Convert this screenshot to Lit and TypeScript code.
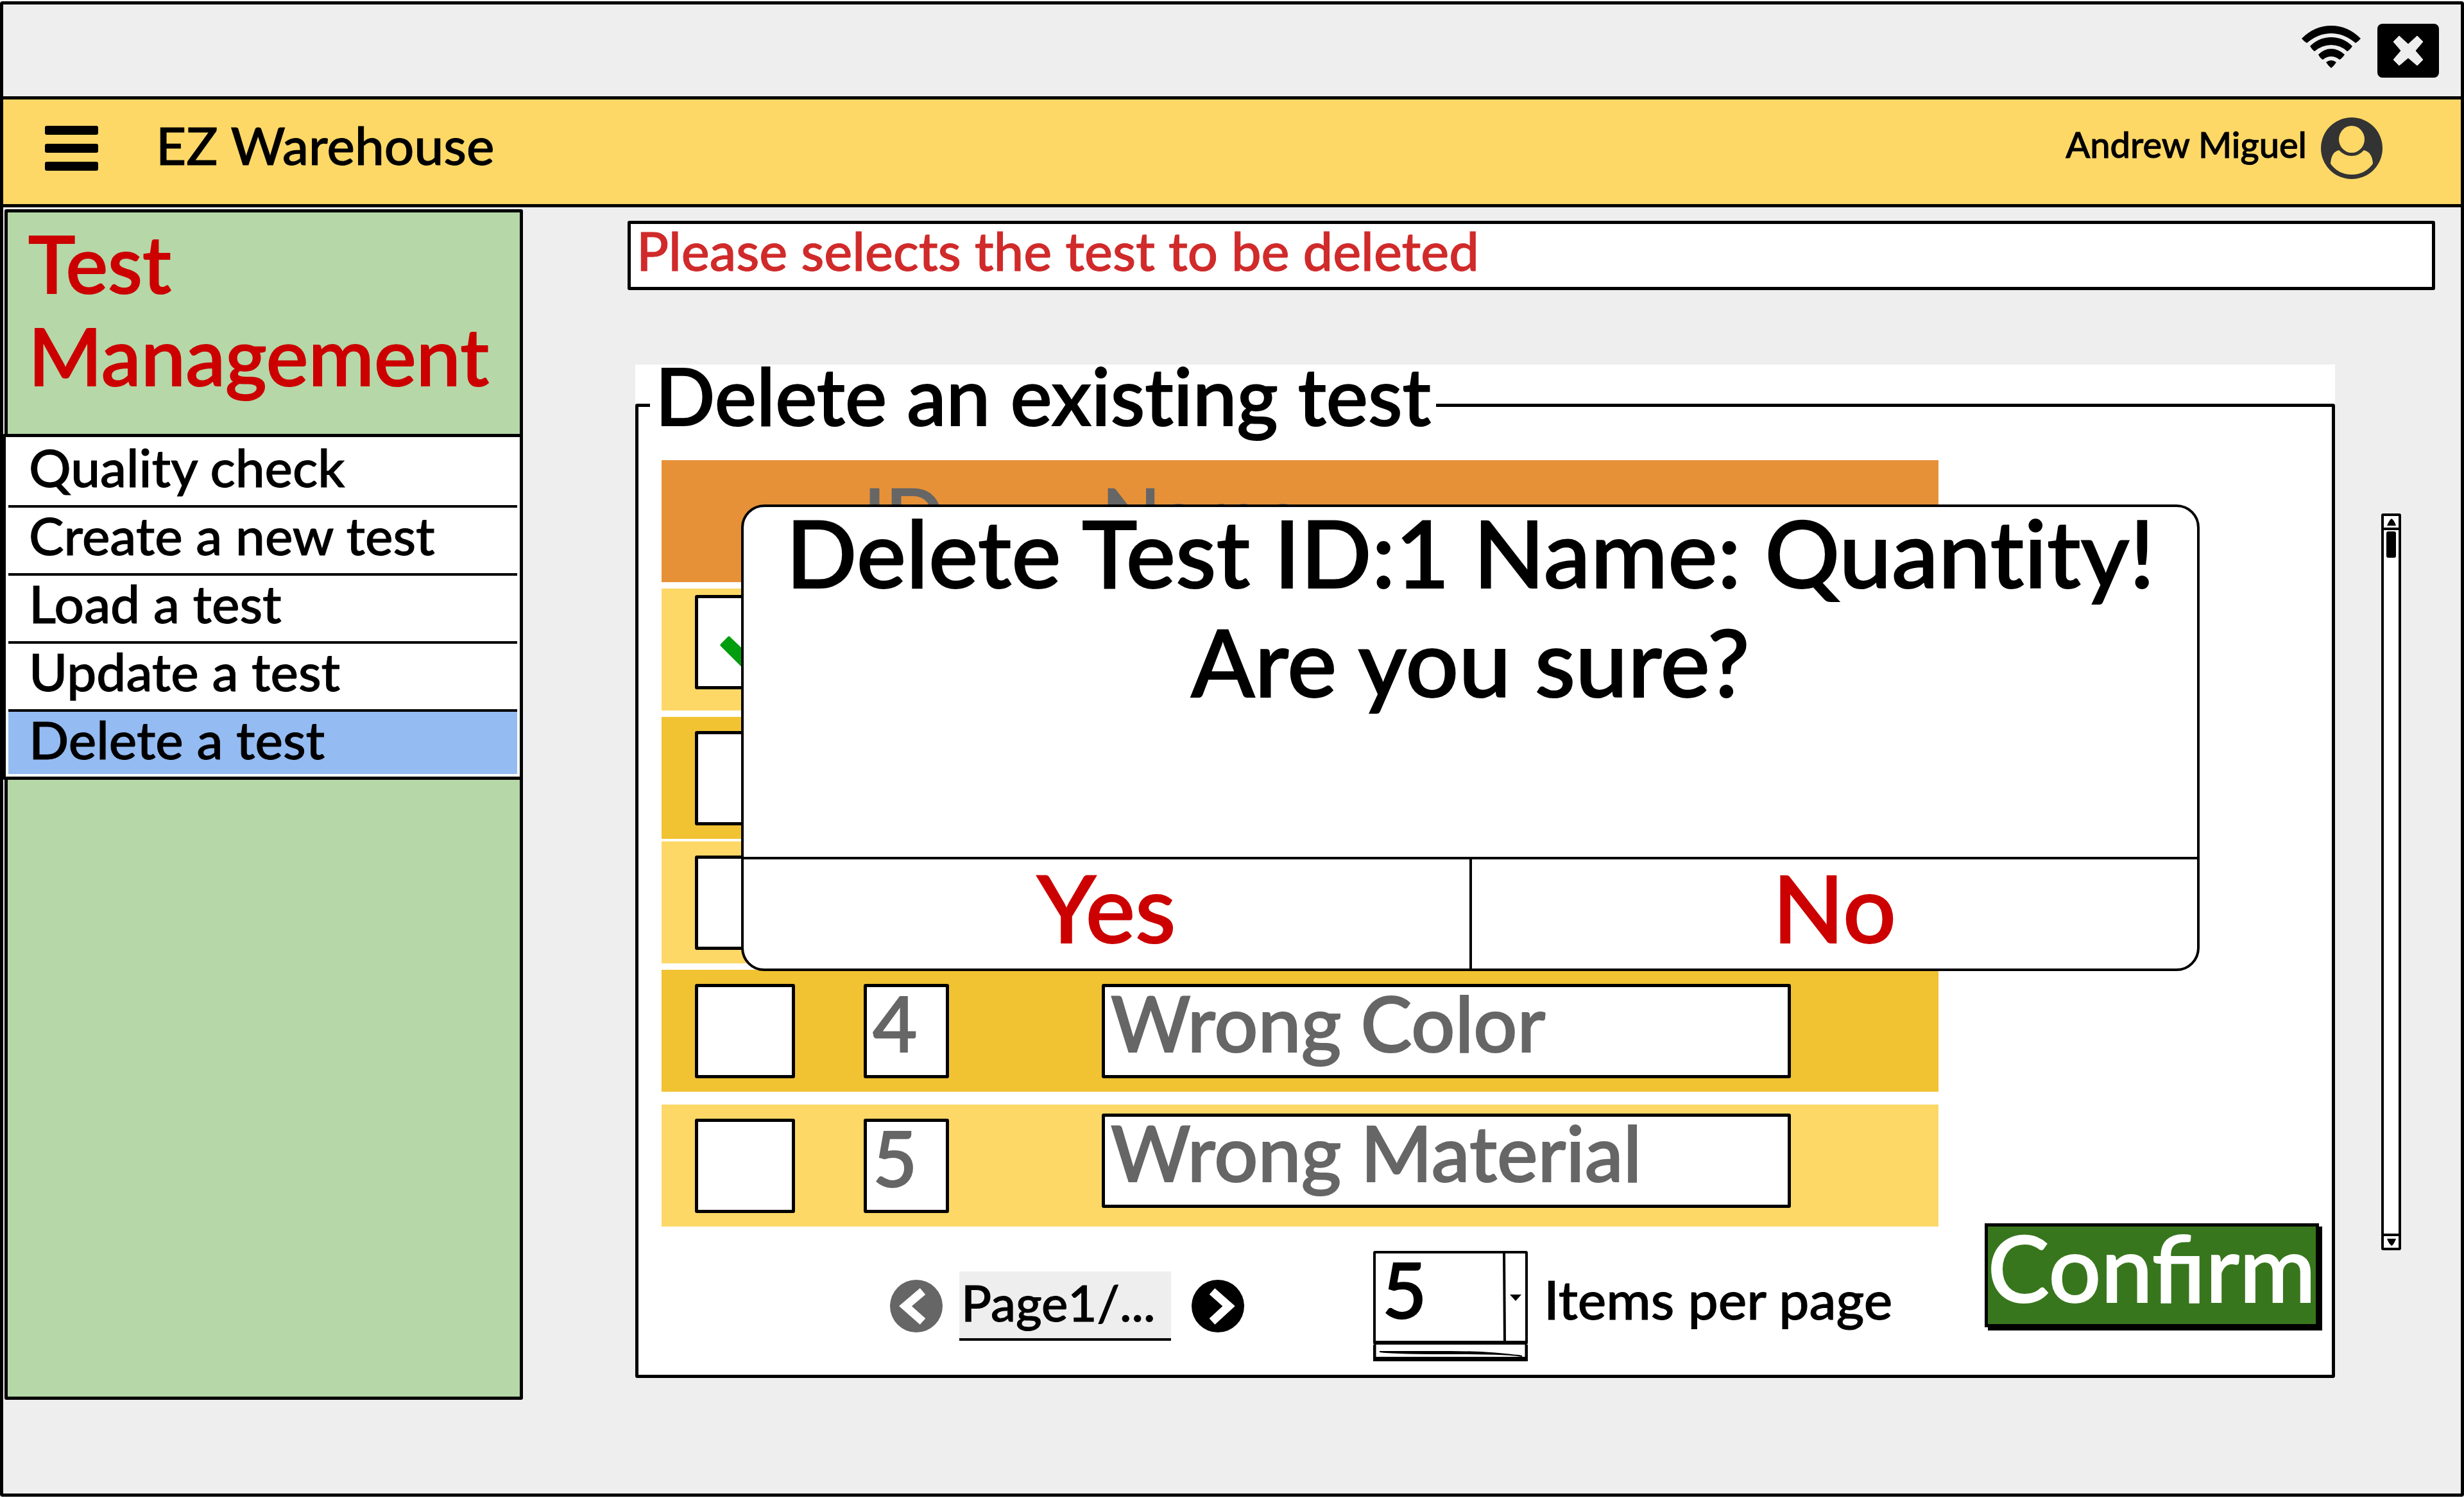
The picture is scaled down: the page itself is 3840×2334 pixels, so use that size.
import { LitElement, html, css, svg, nothing } from "lit";
import { customElement, property, state } from "lit/decorators.js";
import { classMap } from "lit/directives/class-map.js";

interface TestRow {
  id: string;
  name: string;
  tone: "light" | "dark";
  gap: "normal" | "tight" | "wide";
  align?: "raised" | "lifted";
}

const MENU = ["Quality check", "Create a new test", "Load a test", "Update a test", "Delete a test"];

const ROWS: TestRow[] = [
  { id: "1", name: "Quantity", tone: "light", gap: "normal", align: "raised" },
  { id: "2", name: "", tone: "dark", gap: "normal" },
  { id: "3", name: "", tone: "light", gap: "tight" },
  { id: "4", name: "Wrong Color", tone: "dark", gap: "normal" },
  { id: "5", name: "Wrong Material", tone: "light", gap: "wide", align: "lifted" },
];

const base = css`
  * {
    box-sizing: border-box;
  }
  button,
  input,
  select {
    font: inherit;
    font-variant-ligatures: inherit;
    color: inherit;
    margin: 0;
    padding: 0;
    border: 0;
    border-radius: 0;
    background: none;
    appearance: none;
  }
  svg {
    display: block;
  }
`;

@customElement("top-bars")
class TopBars extends LitElement {
  static styles = [
    base,
    css`
      :host {
        display: block;
      }
      .status {
        display: flex;
        justify-content: flex-end;
        align-items: center;
        gap: 26px;
        height: 148px;
        padding: 0 34px 0 0;
        border-bottom: 5px solid #000;
      }
      .status .wifi {
        width: 92px;
        height: 66px;
        margin-bottom: 12px;
      }
      .status .close {
        width: 96px;
        height: 84px;
      }
      .brand {
        display: flex;
        align-items: center;
        height: 168px;
        padding: 0 122px 12px 65px;
        background: #fdd866;
        border-bottom: 5px solid #000;
      }
      .menu {
        width: 83px;
        height: 70px;
      }
      .title {
        flex: 1;
        margin: 0 0 0 90px;
        padding-bottom: 12px;
        font-size: 82px;
        font-weight: 500;
      }
      .user {
        padding-bottom: 12px;
        margin-right: 22px;
        font-size: 56px;
      }
      .avatar {
        width: 96px;
        height: 96px;
      }
    `,
  ];

  render() {
    return html`
      <div class="status">
        <svg class="wifi" viewBox="0 0 92 66" role="img" aria-label="Wi-Fi">
          <path d="M0 20Q20 0 46 0T92 20Q88 25 84 27Q66 12 46 12T8 27Q4 25 0 20Z" />
          <path d="M13 32Q27 18 46 18T79 32Q75 38 71 40Q60 30 46 30T20 40Q16 37 13 32Z" />
          <path d="M26 45Q35 36 46 36T67 45Q63 51 59 53Q53 48 46 48T33 53Q29 51 26 45Z" />
          <path d="M38 57Q42 54 46 54T54 57Q51 62 46 66Q41 62 38 57Z" />
        </svg>
        <button class="close" aria-label="Close">
          <svg viewBox="0 0 96 84">
            <rect width="96" height="84" rx="8" />
            <path
              fill="#eeeeee"
              d="M34 19L48 32L62 19L71 28L59 42L71 56L62 65L48 53L34 65L25 56L37 42L25 28Z"
              stroke="#eeeeee"
              stroke-width="1"
              stroke-linejoin="round"
            />
          </svg>
        </button>
      </div>
      <header class="brand">
        <button class="menu" aria-label="Menu">
          <svg viewBox="0 0 83 70">
            <rect width="83" height="14" rx="3" />
            <rect y="28" width="83" height="14" rx="3" />
            <rect y="56" width="83" height="14" rx="3" />
          </svg>
        </button>
        <h1 class="title">EZ Warehouse</h1>
        <span class="user">Andrew Miguel</span>
        <svg class="avatar" viewBox="0 0 96 96" role="img" aria-label="Profile">
          <circle cx="48" cy="48" r="48" fill="#333" />
          <path fill="#fdd866" d="M28 51Q16 54 15 72Q27 89 48 89T81 72Q80 54 67 51Q59 60 48 60T28 51Z" />
          <ellipse cx="48" cy="34" rx="20" ry="21" fill="#fdd866" />
        </svg>
      </header>
    `;
  }
}

@customElement("side-menu")
class SideMenu extends LitElement {
  @property({ attribute: false }) items: string[] = [];
  @property() current = "";

  static styles = [
    base,
    css`
      :host {
        display: block;
        background: #b6d7a8;
        border: 5px solid #000;
        border-radius: 3px;
      }
      .heading {
        margin: 0;
        padding: 6px 0 51px 32px;
        color: #cc0000;
        font-size: 124px;
        font-weight: 500;
        line-height: 144px;
        -webkit-text-stroke-width: 2px;
      }
      .list {
        margin: 0 -5px 0 -8px;
        padding: 4px 0 0;
        list-style: none;
        background: #fff;
        border: 5px solid #000;
        border-radius: 3px;
      }
      .item {
        margin: 0 4px;
        border-bottom: 4px solid #000;
      }
      .item:last-child {
        border-bottom-color: #fff;
      }
      .link {
        display: block;
        padding: 0 0 18px 32px;
        color: #000;
        font-size: 82px;
        line-height: 84px;
        text-decoration: none;
      }
      .item:last-child .link {
        padding-bottom: 13px;
      }
      .link.active {
        background: #94bbf2;
      }
    `,
  ];

  render() {
    return html`
      <h2 class="heading">Test<br />Management</h2>
      <ul class="list">
        ${this.items.map(
          (t) => html`<li class="item">
            <a class=${classMap({ link: true, active: t === this.current })} href="#">${t}</a>
          </li>`,
        )}
      </ul>
    `;
  }
}

@customElement("test-table")
class TestTable extends LitElement {
  @property({ attribute: false }) rows: TestRow[] = [];
  @state() private picked = "1";

  static styles = [
    base,
    css`
      :host {
        display: block;
        color: #666;
        font-size: 120px;
        -webkit-text-stroke-width: 2px;
      }
      .grid,
      .part {
        display: block;
      }
      .row {
        display: grid;
        grid-template-columns: 156px 133px 1fr;
        column-gap: 107px;
        align-items: center;
        height: 190px;
        padding: 0 230px 0 52px;
      }
      .row.head {
        background: #e69138;
      }
      .row.light {
        background: #fdd866;
      }
      .row.dark {
        background: #f1c232;
      }
      .row.normal {
        margin-top: 10px;
      }
      .row.tight {
        margin-top: 4px;
      }
      .row.wide {
        margin-top: 20px;
      }
      .row.raised {
        padding-bottom: 24px;
      }
      .row.lifted .name {
        padding-bottom: 16px;
      }
      .cell {
        display: block;
        padding: 0;
        text-align: left;
        font-weight: inherit;
      }
      .name {
        padding-left: 131px;
      }
      .row.head .cell {
        padding-bottom: 20px;
      }
      .box {
        display: block;
        width: 100%;
        height: 147px;
        padding: 0 0 26px 9px;
        background: #fff;
        border: 5px solid #000;
        border-radius: 3px;
      }
      .pick {
        display: grid;
      }
      .pick > * {
        grid-area: 1 / 1;
      }
      .mark {
        width: 156px;
        height: 147px;
        pointer-events: none;
      }
    `,
  ];

  private toggle(id: string) {
    this.picked = this.picked === id ? "" : id;
  }

  render() {
    return html`
      <table class="grid">
        <thead class="part">
          <tr class="row head">
            <td class="cell"></td>
            <th class="cell" scope="col">ID</th>
            <th class="cell name" scope="col">Name</th>
          </tr>
        </thead>
        <tbody class="part">
          ${this.rows.map(
            (r) => html`<tr class="row ${r.tone} ${r.gap} ${r.align ?? ""}">
              <td class="cell">
                <label class="pick">
                  <input
                    class="box"
                    type="checkbox"
                    aria-label="Select test ${r.id}"
                    .checked=${this.picked === r.id}
                    @change=${() => this.toggle(r.id)}
                  />
                  ${this.picked === r.id
                    ? svg`<svg class="mark" viewBox="0 0 156 147">
                        <path d="M42 78L53 67L78 91L120 49L132 61L78 114Z" fill="#009e0f" stroke="#009e0f" stroke-width="5" stroke-linejoin="round" />
                      </svg>`
                    : nothing}
                </label>
              </td>
              <td class="cell"><input class="box" aria-label="ID" readonly .value=${r.id} /></td>
              <td class="cell name"><input class="box" aria-label="Name" readonly .value=${r.name} /></td>
            </tr>`,
          )}
        </tbody>
      </table>
    `;
  }
}

@customElement("page-controls")
class PageControls extends LitElement {
  static styles = [
    base,
    css`
      :host {
        display: flex;
        align-items: center;
        padding-left: 356px;
        font-size: 78px;
      }
      .step {
        width: 83px;
        height: 83px;
      }
      .page {
        width: 330px;
        height: 108px;
        margin: 0 32px 0 25px;
        padding: 0 0 8px 3px;
        background: #eee;
        border-bottom: 4px solid #000;
      }
      .size {
        display: grid;
        width: 241px;
        margin-left: 200px;
      }
      .choice {
        grid-area: 1 / 1;
        height: 146px;
        padding: 0 0 26px 10px;
        background: #fff;
        border: 4px solid #000;
        border-bottom-width: 6px;
        border-radius: 3px;
        font-size: 120px;
        line-height: 110px;
        -webkit-text-stroke-width: 2px;
      }
      .arrow {
        grid-area: 1 / 1;
        justify-self: end;
        width: 40px;
        height: 146px;
        pointer-events: none;
      }
      .drawer {
        width: 241px;
        height: 26px;
      }
      .label {
        margin-left: 25px;
        padding-bottom: 24px;
        font-size: 84px;
      }
    `,
  ];

  render() {
    return html`
      <button class="step" aria-label="Previous page">
        <svg viewBox="0 0 83 83">
          <circle cx="41" cy="41" r="41" fill="#666" />
          <path d="M51 18L24 41L51 65" fill="none" stroke="#fff" stroke-width="13" />
        </svg>
      </button>
      <input class="page" aria-label="Page" value="Page1/..." />
      <button class="step" aria-label="Next page">
        <svg viewBox="0 0 83 83">
          <circle cx="41" cy="41" r="41" />
          <path d="M32 18L58 41L32 65" fill="none" stroke="#fff" stroke-width="13" />
        </svg>
      </button>
      <div class="size">
        <select class="choice" id="size">
          <option>5</option>
        </select>
        <svg class="arrow" viewBox="0 0 40 146">
          <path d="M3 2L4 144" stroke="#000" stroke-width="4" />
          <path d="M12 68H30L21 78Z" />
        </svg>
        <svg class="drawer" viewBox="0 0 241 26">
          <path d="M2 0V22H239V0" fill="none" stroke="#000" stroke-width="5" />
          <path d="M0 19H241V26H0Z" />
          <path d="M10 11Q30 14 120 14T232 18Q180 11 120 11T10 11Z" stroke="#000" stroke-width="2" />
        </svg>
      </div>
      <label class="label" for="size">Items per page</label>
    `;
  }
}

@customElement("confirm-dialog")
class ConfirmDialog extends LitElement {
  static styles = [
    base,
    css`
      :host {
        display: flex;
        flex-direction: column;
        background: #fff;
        border: 4px solid #000;
        border-radius: 36px;
        font-size: 146px;
        text-align: center;
        -webkit-text-stroke-width: 2px;
      }
      .text {
        flex: 1;
      }
      .line {
        margin: 0 0 30px;
        line-height: 140px;
        white-space: nowrap;
      }
      .actions {
        display: flex;
        height: 174px;
        border-top: 4px solid #000;
      }
      .answer {
        flex: 1;
        padding-bottom: 22px;
        color: #cc0000;
        line-height: 148px;
      }
      .answer + .answer {
        border-left: 4px solid #000;
      }
    `,
  ];

  render() {
    return html`
      <div class="text">
        <p class="line">Delete Test ID:1 Name: Quantity!</p>
        <p class="line">Are you sure?</p>
      </div>
      <div class="actions">
        <button class="answer">Yes</button>
        <button class="answer">No</button>
      </div>
    `;
  }
}

@customElement("scroll-track")
class ScrollTrack extends LitElement {
  static styles = [
    base,
    css`
      :host {
        display: flex;
        flex-direction: column;
        background: #fff;
        border: 4px solid #000;
        border-radius: 3px;
      }
      .end {
        height: 22px;
        border-bottom: 4px solid #000;
      }
      .end.down {
        border-bottom: 0;
        border-top: 4px solid #000;
      }
      .end svg {
        width: 14px;
        height: 11px;
        margin: 0 auto;
      }
      .track {
        flex: 1;
        padding: 2px 4px;
      }
      .thumb {
        height: 41px;
        background: #000;
        border-radius: 3px;
      }
    `,
  ];

  render() {
    return html`
      <button class="end" aria-label="Scroll up">
        <svg viewBox="0 0 14 11"><path d="M7 0Q11 2 14 11H0Q3 3 7 0Z" /></svg>
      </button>
      <div class="track"><div class="thumb"></div></div>
      <button class="end down" aria-label="Scroll down">
        <svg viewBox="0 0 14 11"><path d="M7 11Q11 9 14 0H0Q3 8 7 11Z" /></svg>
      </button>
    `;
  }
}

@customElement("app-root")
class AppRoot extends LitElement {
  static styles = [
    base,
    css`
      :host {
        display: flex;
        flex-direction: column;
        box-sizing: border-box;
        min-height: 100vh;
        padding: 2px 0;
        background: #fff;
        color: #000;
        font-family: Lato, "Liberation Sans", sans-serif;
        font-weight: 500;
        font-variant-ligatures: no-common-ligatures;
        -webkit-text-stroke-width: 1px;
      }
      .window {
        display: flex;
        flex-direction: column;
        flex: 1;
        background: #eee;
        border: 5px solid #000;
        border-radius: 4px;
      }
      .body {
        display: flex;
        flex: 1;
        padding: 0 40px 0 2px;
      }
      side-menu {
        width: 808px;
        margin: 3px 0 146px;
      }
      .main {
        flex: 1;
        min-width: 0;
        padding: 21px 0 0 163px;
      }
      .notice {
        margin: 0;
        padding: 0 0 16px 9px;
        background: #fff;
        border: 5px solid #000;
        border-radius: 3px;
        color: #d02a2a;
        font-size: 83px;
        line-height: 82px;
      }
      .work {
        display: flex;
        gap: 72px;
        padding: 116px 53px 0 12px;
      }
      .panel {
        position: relative;
        flex: 1;
        min-width: 0;
        background: #fff;
      }
      .group {
        display: grid;
        grid-template-columns: 1fr 524px;
        column-gap: 74px;
        min-width: 0;
        margin: 0;
        padding: 23px 15px 21px 36px;
        border: 5px solid #000;
        border-radius: 3px;
      }
      .legend {
        margin-left: -18px;
        padding: 0 8px 30px 8px;
        font-size: 123px;
        line-height: 96px;
        -webkit-text-stroke-width: 2px;
      }
      page-controls {
        margin-top: 38px;
      }
      .confirm {
        align-self: end;
        justify-self: end;
        height: 162px;
        margin: 0 5px 53px 0;
        padding: 0 0 26px;
        background: #38761d;
        border: 5px solid #000;
        box-shadow: 5px 5px 0 #000;
        color: #fff;
        font-size: 144px;
        font-variant-ligatures: normal;
        line-height: 126px;
        -webkit-text-stroke-width: 2px;
      }
      confirm-dialog {
        position: absolute;
        box-sizing: border-box;
        top: 218px;
        left: 165px;
        right: 211px;
        height: 727px;
      }
      scroll-track {
        box-sizing: border-box;
        width: 31px;
        height: 1148px;
        margin-top: 232px;
      }
    `,
  ];

  render() {
    return html`
      <div class="window">
        <top-bars></top-bars>
        <div class="body">
          <side-menu .items=${MENU} current="Delete a test"></side-menu>
          <main class="main">
            <p class="notice" role="status">Please selects the test to be deleted</p>
            <div class="work">
              <section class="panel">
                <fieldset class="group">
                  <legend class="legend">Delete an existing test</legend>
                  <div>
                    <test-table .rows=${ROWS}></test-table>
                    <page-controls></page-controls>
                  </div>
                  <button class="confirm">Confirm</button>
                </fieldset>
                <confirm-dialog role="dialog"></confirm-dialog>
              </section>
              <scroll-track></scroll-track>
            </div>
          </main>
        </div>
      </div>
    `;
  }
}
